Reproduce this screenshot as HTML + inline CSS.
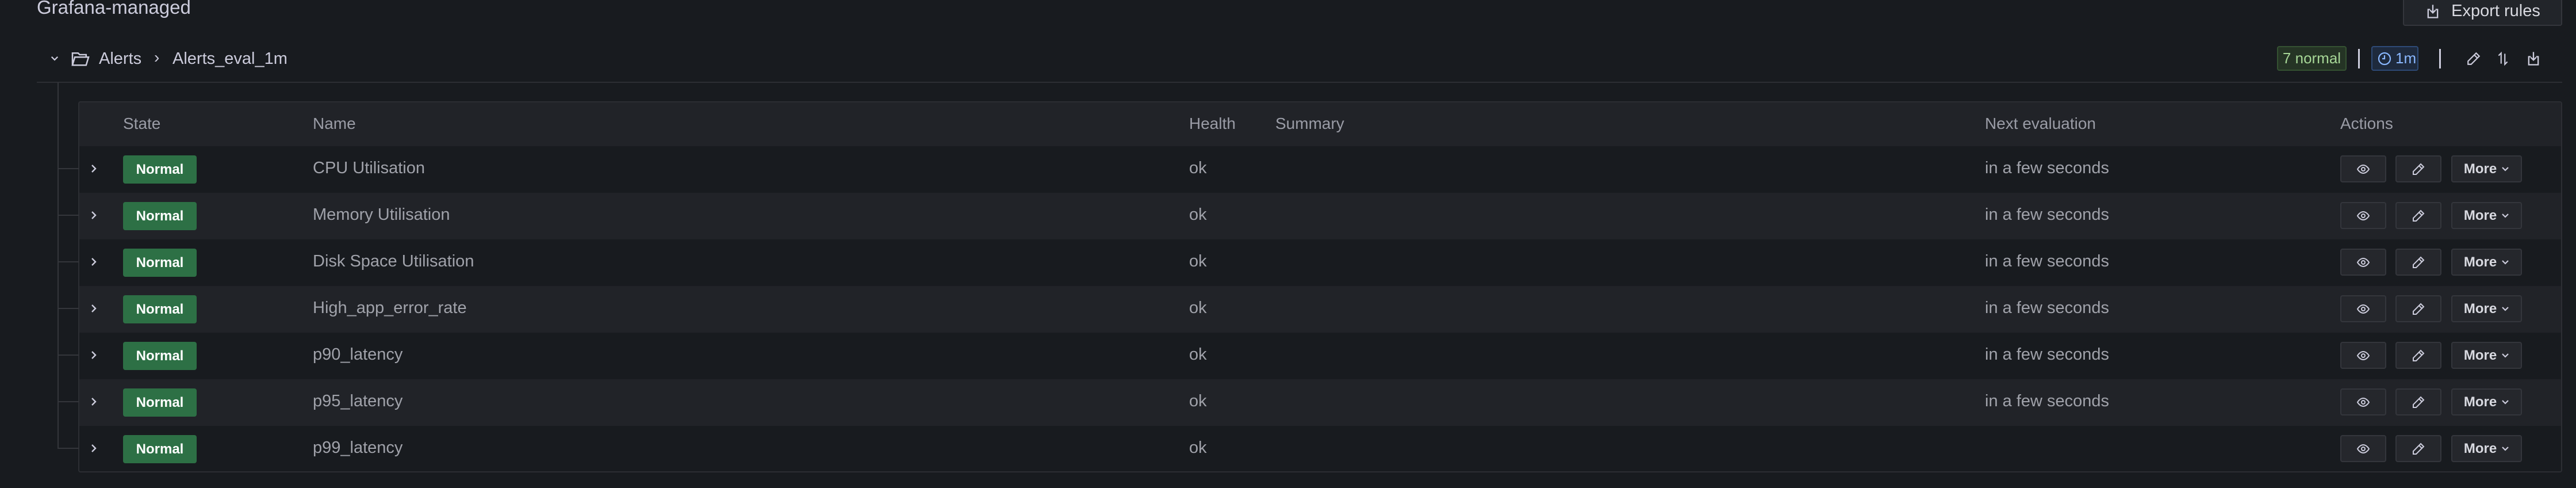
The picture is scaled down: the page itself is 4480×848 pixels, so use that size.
<!DOCTYPE html>
<html><head><meta charset="utf-8"><style>
*{box-sizing:border-box;margin:0;padding:0}
body{width:4480px;height:848px;background:#181b1f;font-family:"Liberation Sans",sans-serif;position:relative;overflow:hidden;color:#ccccdc}
.a{position:absolute;white-space:nowrap}
.hd{color:#9a9ca6;font-size:28px}
.tx{color:#a0a2aa;font-size:29px}
.badge{position:absolute;left:214px;width:128px;height:49px;background:#2d7045;border-radius:4px;color:#fff;font-weight:bold;font-size:24px;line-height:49px;text-align:center}
.btn{position:absolute;height:47px;background:#25272c;border:2px solid #34363c;border-radius:4px;display:flex;align-items:center;justify-content:center;color:#d8d9e0;font-size:24px;font-weight:bold}
</style></head><body>
<div class="a" style="left:64px;top:-6px;font-size:33px;color:#ccccdc">Grafana-managed</div>
<div class="btn" style="left:4179px;top:-6px;width:277px;height:51px;background:#22252a;font-weight:normal;font-size:29px;color:#d8d9e0">
<svg width="28" height="28" viewBox="0 0 24 24" fill="none" stroke="#ccccdc" stroke-width="2" style="margin-right:18px"><path d="M8 9H5v12h14V9h-3M12 2v12M8 10l4 4 4-4"/></svg>Export rules</div>

<svg class="a" style="left:86px;top:92px" width="18" height="18" viewBox="0 0 24 24" fill="none" stroke="#ccccdc" stroke-width="3"><path d="M5 9l7 7 7-7"/></svg>
<svg class="a" style="left:123px;top:88px" width="34" height="28" viewBox="0 0 24 20" fill="none" stroke="#ccccdc" stroke-width="1.8"><path d="M2 18V3h7l2 2h8v3M2 18l3-10h17l-3 10z"/></svg>
<div class="a" style="left:172px;top:86px;font-size:29px">Alerts</div>
<div class="a" style="left:268px;top:84px;font-size:28px">›</div>
<div class="a" style="left:300px;top:86px;font-size:29px">Alerts_eval_1m</div>

<div class="a" style="left:3960px;top:80px;width:121px;height:43px;background:#253425;border:2px solid #355232;border-radius:4px;color:#a6d696;font-size:26px;line-height:39px;text-align:center">7 normal</div>
<div class="a" style="left:4101px;top:85px;width:3px;height:34px;background:#ccccdc"></div>
<div class="a" style="left:4124px;top:80px;width:82px;height:43px;background:#1e2a3d;border:2px solid #2e4a77;border-radius:4px;color:#8ab8ff;font-size:26px;line-height:39px;padding-left:40px">1m
<svg style="position:absolute;left:9px;top:8px" width="24" height="24" viewBox="0 0 24 24" fill="none" stroke="#8ab8ff" stroke-width="2.2"><circle cx="12" cy="12" r="10"/><path d="M12 6v6H8"/></svg></div>
<div class="a" style="left:4242px;top:85px;width:3px;height:34px;background:#ccccdc"></div>
<svg class="a" style="left:4289px;top:89px" width="26" height="26" viewBox="0 0 24 24" fill="none" stroke="#ccccdc" stroke-width="2"><path d="M16 3l5 5L8 21H3v-5z M13 6l5 5"/></svg>
<svg class="a" style="left:4340px;top:88px" width="26" height="28" viewBox="0 0 24 24" fill="none" stroke="#ccccdc" stroke-width="2"><path d="M9 20V3L5 7M15 4v17l4-4"/></svg>
<svg class="a" style="left:4392px;top:88px" width="28" height="28" viewBox="0 0 24 24" fill="none" stroke="#ccccdc" stroke-width="2"><path d="M8 9H5v12h14V9h-3M12 2v12M8 10l4 4 4-4"/></svg>

<div class="a" style="left:64px;top:142px;width:4392px;height:2px;background:#2c2e33"></div>
<div class="a" style="left:100px;top:143px;width:2px;height:637px;background:#34363b"></div>

<div class="a" style="left:136px;top:176px;width:4320px;height:645px;border:2px solid #2c2e33;border-radius:4px;background:#181b1f;overflow:hidden">
 <div style="position:absolute;left:0;top:0;width:100%;height:76px;background:#212328"></div>
 <div style="position:absolute;left:0;top:157px;width:100%;height:81px;background:#212328"></div>
 <div style="position:absolute;left:0;top:319px;width:100%;height:81px;background:#212328"></div>
 <div style="position:absolute;left:0;top:481px;width:100%;height:81px;background:#212328"></div>
</div>
<div class="a hd" style="left:214px;top:199px">State</div>
<div class="a hd" style="left:544px;top:199px">Name</div>
<div class="a hd" style="left:2068px;top:199px">Health</div>
<div class="a hd" style="left:2218px;top:199px">Summary</div>
<div class="a hd" style="left:3452px;top:199px">Next evaluation</div>
<div class="a hd" style="left:4070px;top:199px">Actions</div>

<div id="rows"></div>
<script>
var names=["CPU Utilisation","Memory Utilisation","Disk Space Utilisation","High_app_error_rate","p90_latency","p95_latency","p99_latency"];
var h="";
for(var i=0;i<7;i++){var c=253+81*i+40;
h+='<div class="a" style="left:101px;top:'+(c-1)+'px;width:36px;height:2px;background:#34363b"></div>';
h+='<svg class="a" style="left:156px;top:'+(c-9)+'px" width="14" height="18" viewBox="0 0 14 18" fill="none" stroke="#ccccdc" stroke-width="2.4"><path d="M4 3l6 6-6 6"/></svg>';
h+='<div class="badge" style="top:'+(c-23)+'px">Normal</div>';
h+='<div class="a tx" style="left:544px;top:'+(c-17)+'px">'+names[i]+'</div>';
h+='<div class="a tx" style="left:2068px;top:'+(c-17)+'px">ok</div>';
if(i<6)h+='<div class="a tx" style="left:3452px;top:'+(c-17)+'px">in a few seconds</div>';
h+='<div class="btn" style="left:4070px;top:'+(c-23)+'px;width:80px"><svg width="24" height="24" viewBox="0 0 24 24" fill="none" stroke="#ccccdc" stroke-width="2"><path d="M2 12s4-7 10-7 10 7 10 7-4 7-10 7S2 12 2 12z"/><circle cx="12" cy="12" r="3"/></svg></div>';
h+='<div class="btn" style="left:4166px;top:'+(c-23)+'px;width:80px"><svg width="24" height="24" viewBox="0 0 24 24" fill="none" stroke="#ccccdc" stroke-width="2"><path d="M16 3l5 5L8 21H3v-5z M13 6l5 5"/></svg></div>';
h+='<div class="btn" style="left:4263px;top:'+(c-23)+'px;width:123px">More<svg style="margin-left:8px" width="14" height="14" viewBox="0 0 14 14" fill="none" stroke="#ccccdc" stroke-width="2.2"><path d="M2 4l5 5 5-5"/></svg></div>';}
document.getElementById("rows").innerHTML=h;
</script>
</body></html>
